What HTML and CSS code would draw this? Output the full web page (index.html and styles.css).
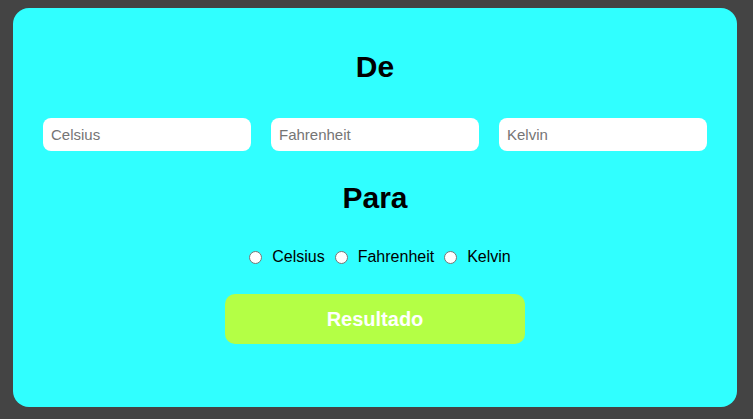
FILE: index.html
```html
<!DOCTYPE html>
<html lang="pt">
<head>
<meta charset="utf-8">
<title>Conversor de Temperatura</title>
<link rel="stylesheet" href="styles.css">
</head>
<body>
<main class="card">
  <h1 class="title">De</h1>
  <div class="inputs">
    <input class="field" type="text" placeholder="Celsius">
    <input class="field" type="text" placeholder="Fahrenheit">
    <input class="field" type="text" placeholder="Kelvin">
  </div>
  <h1 class="title title-para">Para</h1>
  <div class="radios">
    <span class="radio"></span><span class="label">Celsius</span>
    <span class="radio"></span><span class="label">Fahrenheit</span>
    <span class="radio"></span><span class="label">Kelvin</span>
  </div>
  <button class="btn" type="button">Resultado</button>
</main>
</body>
</html>
```

FILE: styles.css
```css
html, body {
  margin: 0;
  padding: 0;
}
body {
  background: #444444;
  padding: 8px 16px 12px 13px;
  font-family: "Liberation Sans", Arial, sans-serif;
}
.card {
  box-sizing: border-box;
  width: 724px;
  height: 399px;
  background: #30ffff;
  border-radius: 16px;
  padding: 44px 30px 0 30px;
  display: flex;
  flex-direction: column;
  align-items: center;
}
.title {
  margin: 0;
  font-size: 30px;
  line-height: 30px;
  font-weight: bold;
  color: #000;
}
.inputs {
  margin-top: 36px;
  width: 100%;
  display: flex;
  gap: 20px;
}
.field {
  flex: 1;
  min-width: 0;
  box-sizing: border-box;
  height: 33px;
  border: none;
  border-radius: 8px;
  background: #fff;
  padding: 0 8px;
  font-family: "Liberation Sans", Arial, sans-serif;
  font-size: 15px;
  color: #000;
  outline: none;
}
.field::placeholder {
  color: #757575;
}
.title-para {
  margin-top: 32px;
}
.radios {
  margin-top: 34px;
  height: 20px;
  display: flex;
  align-items: center;
  padding-left: 10px;
  font-size: 16px;
  line-height: 20px;
  color: #000;
}
.radio {
  box-sizing: border-box;
  width: 13px;
  height: 13px;
  border: 1px solid #767676;
  border-radius: 50%;
  background: #fff;
  margin-right: 10px;
}
.label {
  margin-right: 10px;
}
.label:last-child {
  margin-right: 0;
}
.btn {
  margin-top: 27px;
  width: 300px;
  height: 50px;
  border: none;
  border-radius: 10px;
  background: #b4ff45;
  color: #fff;
  font-family: "Liberation Sans", Arial, sans-serif;
  font-size: 20px;
  font-weight: bold;
  cursor: pointer;
}
```
